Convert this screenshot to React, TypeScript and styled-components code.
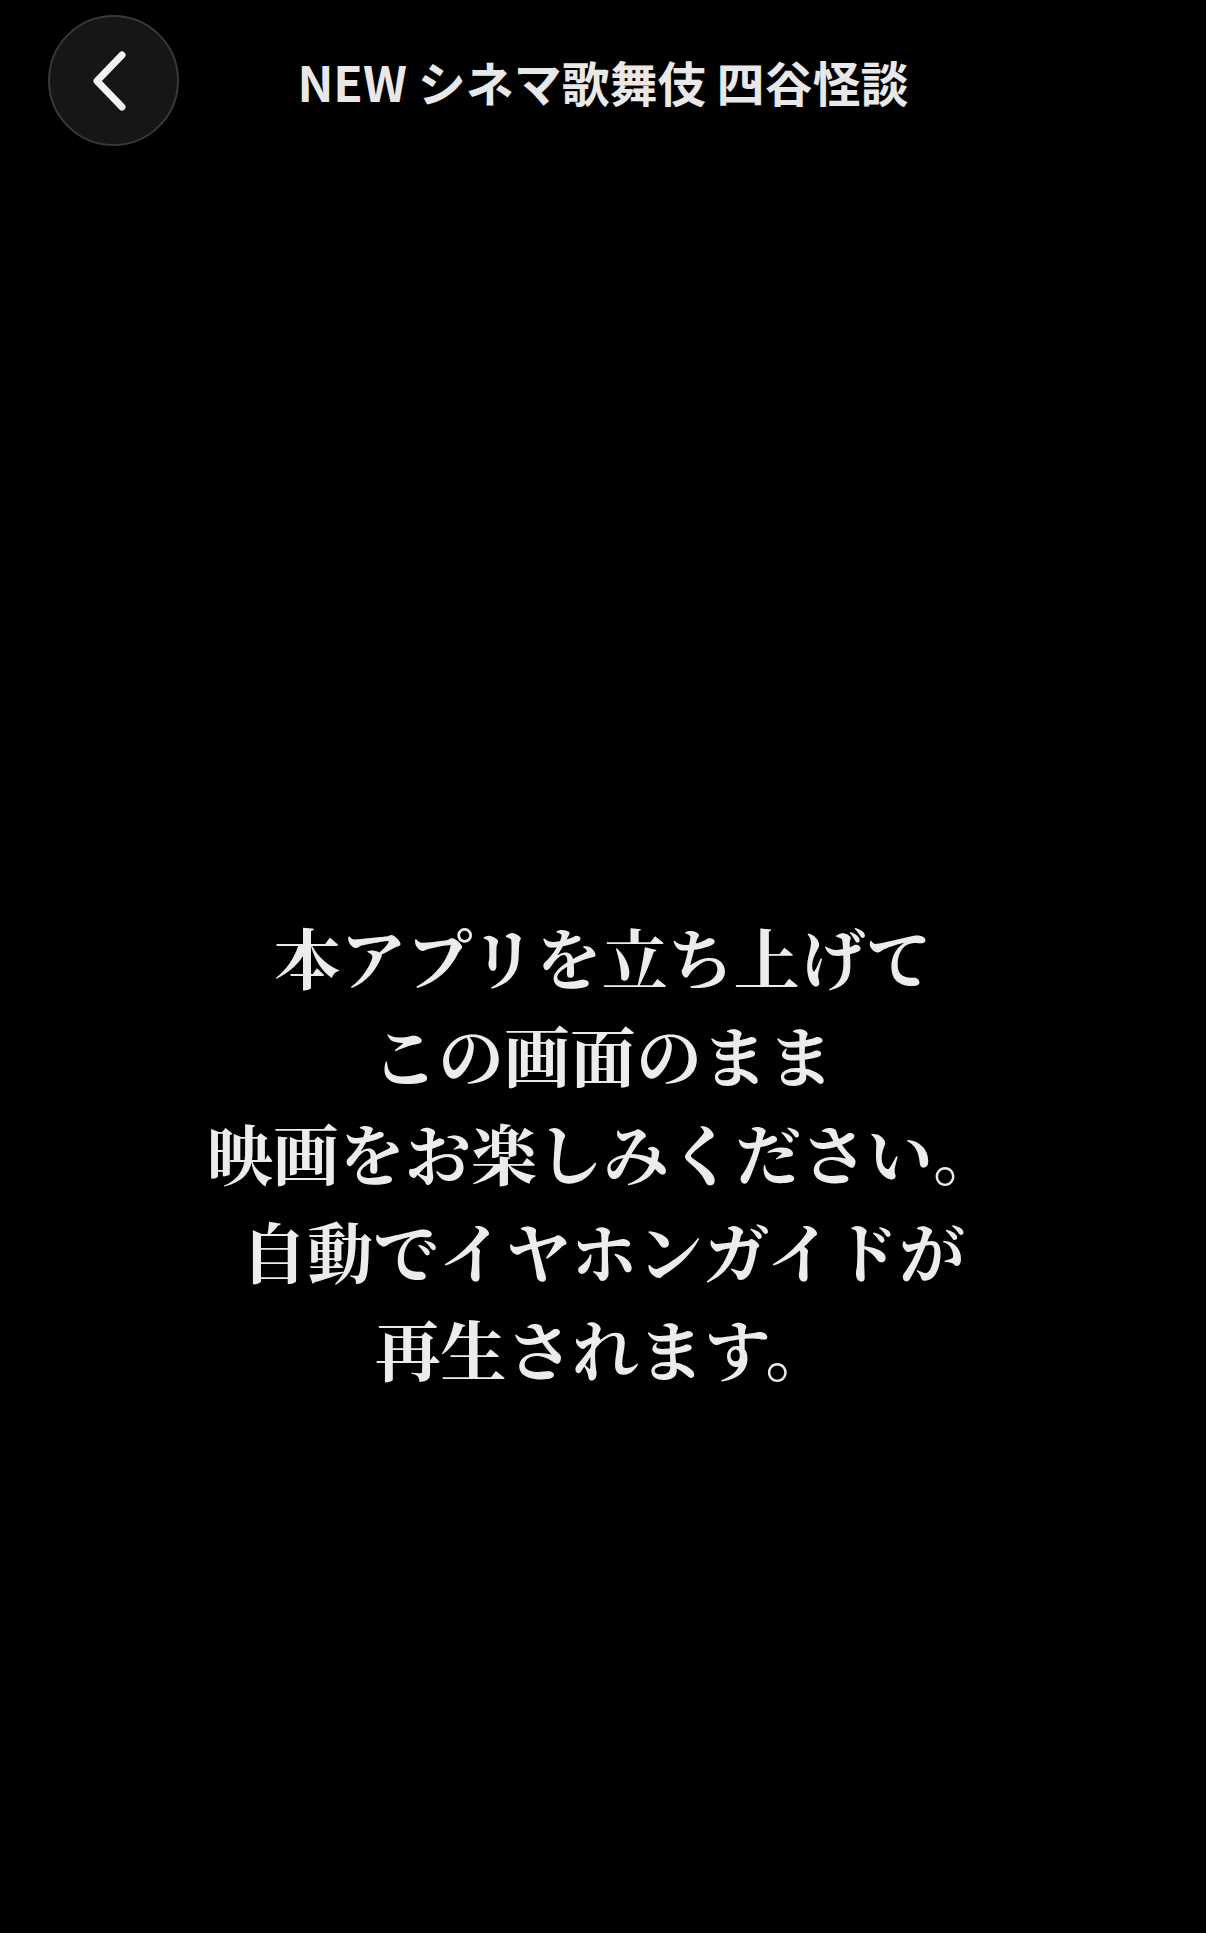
import styled, { createGlobalStyle } from "styled-components";

const GlobalStyle = createGlobalStyle`
  html, body {
    margin: 0;
    padding: 0;
    background: #000000;
  }
  body {
    min-height: 1933px;
    font-family: "Noto Sans CJK JP", "Noto Sans", sans-serif;
  }
`;

/**
 * >>> Style
 */
const Screen = styled.div`
  width: 100%;
  min-height: 1933px;
  background: #000000;
  display: flex;
  flex-direction: column;
`;
const Header = styled.header`
  display: grid;
  grid-template-columns: 1fr auto 1fr;
  align-items: center;

  padding-top: 15px;
`;
const BackButton = styled.button`
  width: 131px;
  height: 131px;

  display: flex;
  align-items: center;
  justify-content: center;

  background-color: #161616;
  border: 2px solid #383838;
  border-radius: 50%;

  margin-left: 48px;
  padding: 0 8px 0 0;
  cursor: pointer;
`;
const Title = styled.h1`
  margin: 0;

  font-family: "Noto Sans CJK JP", "Noto Sans", sans-serif;
  font-weight: 700;
  font-size: 48px;
  line-height: 62px;
  color: #e8e8e8;
  white-space: nowrap;
`;
const Guide = styled.main`
  display: flex;
  flex-direction: column;
  align-items: center;

  padding-top: 761px;
`;
const Line = styled.p`
  margin: 0;

  font-family: "Noto Serif CJK JP", "Noto Serif JP", "Hiragino Mincho ProN",
    "Noto Sans CJK JP", serif;
  font-weight: 700;
  font-size: 66px;
  line-height: 98px;
  color: #ececec;
  white-space: nowrap;
`;
// <<< Style

const lines = [
  "本アプリを立ち上げて",
  "この画面のまま",
  "映画をお楽しみください。",
  "自動でイヤホンガイドが",
  "再生されます。",
];

const App = () => {
  return (
    <Screen>
      <GlobalStyle />
      <Header>
        <div>
          <BackButton aria-label="戻る">
            <svg width="42" height="64" viewBox="0 0 42 64" fill="none">
              <polyline
                points="33,6 8,32 33,58"
                stroke="#f2f2f2"
                strokeWidth="7"
                strokeLinecap="round"
                strokeLinejoin="round"
              />
            </svg>
          </BackButton>
        </div>
        <Title>NEW シネマ歌舞伎 四谷怪談</Title>
        <div />
      </Header>
      <Guide>
        {lines.map((text) => (
          <Line key={text}>{text}</Line>
        ))}
      </Guide>
    </Screen>
  );
};

export default App;
